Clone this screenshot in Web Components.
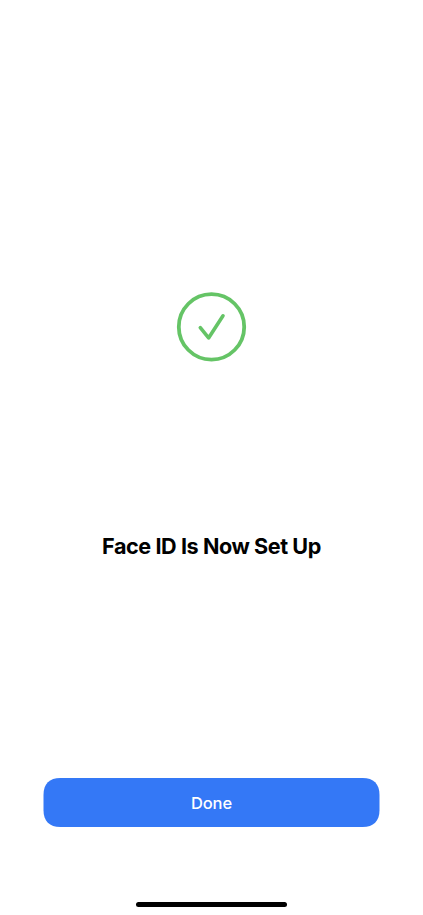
<!DOCTYPE html>
<html lang="en"><head><meta charset="utf-8"><title>Face ID</title>
<style>html,body{margin:0;height:100%;background:#fff;overflow:hidden}</style></head>
<body><setup-screen></setup-screen>
<script>
const define=(name,html)=>customElements.define(name,class extends HTMLElement{
  constructor(){super();this.attachShadow({mode:'open'}).innerHTML=html;}
});
define('success-mark',`<style>:host{display:block;width:71px;height:70px}svg{display:block}</style>
<svg width="71" height="70" viewBox="0 0 71 70" fill="none" stroke="#65c466" stroke-linecap="round" stroke-linejoin="round"><circle cx="35.5" cy="34.9" r="32.7" stroke-width="3.8"/><path d="M24.3 35.7 32.6 45.9 47 23.8" stroke-width="3.6"/></svg>`);
define('screen-title',`<style>:host{display:block}h1{margin:0;font:650 21.6px/28px Inter,sans-serif;letter-spacing:-.43px;color:#000;white-space:nowrap}</style><h1><slot></slot></h1>`);
define('primary-button',`<style>:host{display:block;width:337px;height:50px}
button{display:grid;place-items:center;width:100%;height:100%;border:0;padding:0;background:none;color:#fff;font:550 16.5px/50px Inter,sans-serif;letter-spacing:-.15px}
svg,span{grid-area:1/1}svg{display:block}</style>
<button><svg width="337" height="50" viewBox="0 0 337 50"><path fill="#3478f6" d="M17.3 0H319.7C330.5 0 336.5 6 336.5 16.8V32.2C336.5 43 330.5 49 319.7 49H17.3C6.5 49 .5 43 .5 32.2V16.8C.5 6 6.5 0 17.3 0Z"/></svg><span><slot></slot></span></button>`);
define('home-indicator',`<style>:host{display:block;width:151px;height:5px;border-radius:3px;background:#000}</style>`);
define('setup-screen',`<style>:host{display:flex;box-sizing:border-box;width:423px;height:915px;padding-top:292px;flex-direction:column;align-items:center;background:#fff}
screen-title{margin-top:170px}primary-button{margin-top:218px}home-indicator{margin-top:74px}</style>
<success-mark></success-mark><screen-title>Face ID Is Now Set Up</screen-title><primary-button>Done</primary-button><home-indicator></home-indicator>`);
</script></body></html>
